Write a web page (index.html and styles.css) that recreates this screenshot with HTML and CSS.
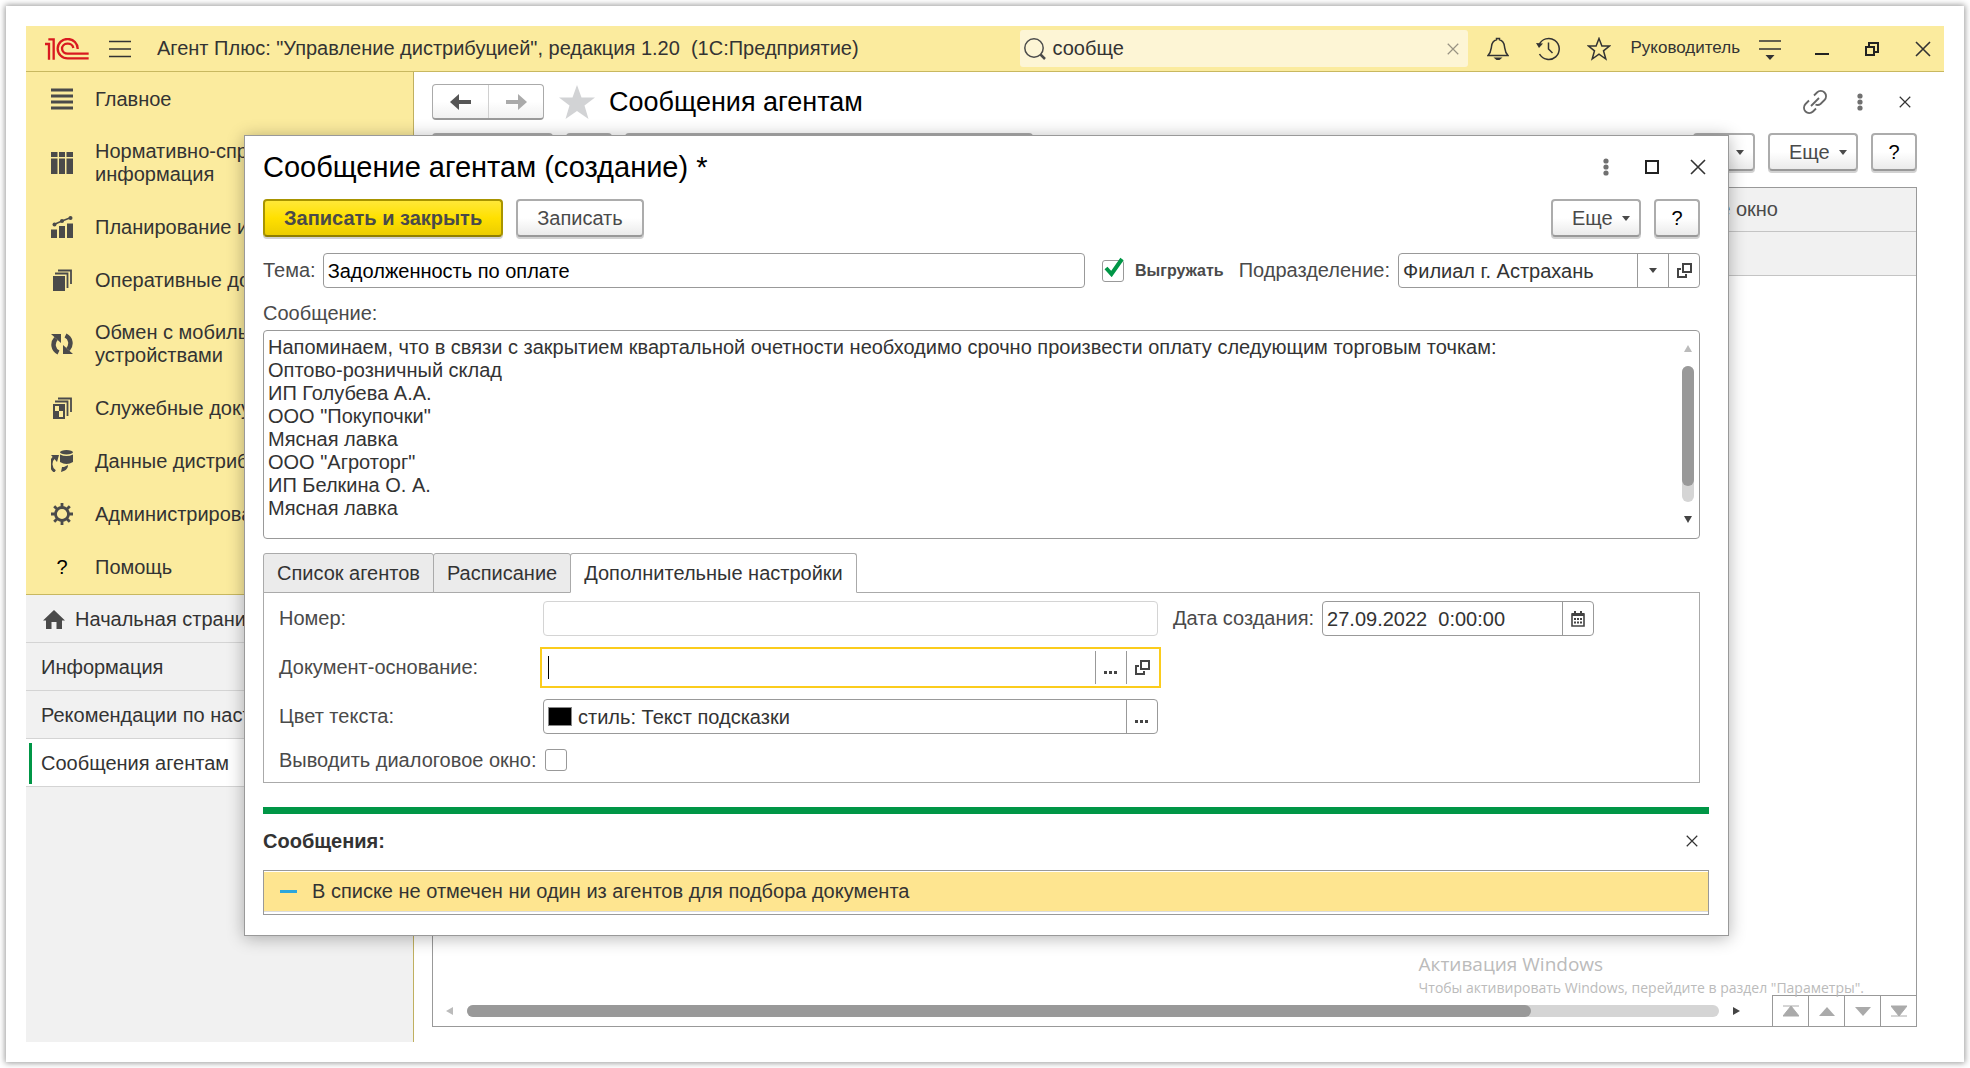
FILE: index.html
```html
<!DOCTYPE html>
<html lang="ru">
<head>
<meta charset="utf-8">
<title>Агент Плюс: Управление дистрибуцией</title>
<link rel="stylesheet" href="styles.css">
</head>
<body>
<svg class="sprite" aria-hidden="true">
  <symbol id="cross" viewBox="0 0 16 16"><path d="M1 1L15 15M15 1L1 15" fill="none" stroke="currentColor" stroke-width="1.6"/></symbol>
  <symbol id="dots" viewBox="0 0 6 18"><g fill="currentColor"><circle cx="3" cy="3" r="2.6"/><circle cx="3" cy="9" r="2.6"/><circle cx="3" cy="15" r="2.6"/></g></symbol>
  <symbol id="caret" viewBox="0 0 8 5"><path d="M0 0H8L4 5Z" fill="currentColor"/></symbol>
  <symbol id="open" viewBox="0 0 15 15"><path d="M6 1H14V9H6ZM4 6H1V14H9V11" fill="none" stroke="currentColor" stroke-width="2"/></symbol>
  <symbol id="ellipsis" viewBox="0 0 14 15"><path d="M0 11H3V14H0ZM5 11H8V14H5ZM10 11H13V14H10Z" fill="currentColor"/></symbol>
</svg>
<div class="app">
  <header class="topbar">
    <svg class="logo" width="44" height="22" viewBox="0 0 132 66" role="img" aria-label="1С"><g fill="none" stroke="#d91a20" stroke-width="7"><path d="M0 18H12V65M10 4H26V65"/><path d="M98 33A30 29 0 1 0 68 61H131"/><path d="M85 30A17 15 0 1 0 68 47H131"/></g></svg>
    <button class="icon-btn menu" aria-label="Меню"><svg width="22" height="18" viewBox="0 0 22 18"><path d="M0 1.500H22M0 9H22M0 16.500H22" stroke="#333" stroke-width="1.500"/></svg></button>
    <span class="app-title">Агент Плюс: "Управление дистрибуцией", редакция 1.20&nbsp; (1С:Предприятие)</span>
    <div class="search">
      <svg width="22" height="22" viewBox="0 0 22 22"><circle cx="10" cy="10" r="9.200" fill="none" stroke="#4c4c4c" stroke-width="1.500"/><path d="M16.500 16.500L21 21" stroke="#4c4c4c" stroke-width="2.500"/></svg>
      <input type="text" value="сообще" aria-label="Поиск">
      <button class="icon-btn muted" aria-label="Очистить"><svg width="12" height="12"><use href="#cross"/></svg></button>
    </div>
    <div class="tools">
      <button class="icon-btn" aria-label="Уведомления"><svg width="22" height="24" viewBox="0 0 22 24"><path d="M1 18.500C4 15.500 4 13 4.500 9.500C5 5.500 7 3.500 9.500 2.800V1.500H12.500V2.800C15 3.500 17 5.500 17.500 9.500C18 13 18 15.500 21 18.500Z" fill="none" stroke="#333" stroke-width="1.500"/><path d="M6.500 20.500H15.500L12.500 23H9.500Z" fill="#333"/></svg></button>
      <button class="icon-btn" aria-label="История"><svg width="24" height="24" viewBox="0 0 24 24"><path d="M3 8A10.500 10.500 0 1 1 3.500 17" fill="none" stroke="#333" stroke-width="1.500"/><path d="M0 6L7 6.500L3 11Z" fill="#333"/><path d="M12.500 5.500V12L16.500 16" fill="none" stroke="#333" stroke-width="1.500"/></svg></button>
      <button class="icon-btn" aria-label="Избранное"><svg width="24" height="24" viewBox="0 0 24 24"><path d="M12 1.500L14.900 9H22.500L16.500 13.800L18.800 22L12 17.200L5.200 22L7.500 13.800L1.500 9H9.100Z" fill="none" stroke="#333" stroke-width="1.500"/></svg></button>
      <a class="user" href="#">Руководитель</a>
      <button class="icon-btn" aria-label="Настройки"><svg width="22" height="22" viewBox="0 0 22 22"><path d="M0 3H22M0 11H22" stroke="#333" stroke-width="1.600"/><path d="M6.500 17H15.500L11 22Z" fill="#333"/></svg></button>
    </div>
    <div class="win-tools">
      <button class="icon-btn" aria-label="Свернуть"><svg width="14" height="14"><path d="M0 12H14" stroke="#222" stroke-width="2"/></svg></button>
      <button class="icon-btn" aria-label="Восстановить"><svg width="14" height="14"><path d="M1 5H9V13H1ZM4 4V1H13V10H10" fill="none" stroke="#222" stroke-width="2"/></svg></button>
      <button class="icon-btn" aria-label="Закрыть"><svg width="16" height="16"><use href="#cross"/></svg></button>
    </div>
  </header>

  <div class="body">
    <aside class="sidebar">
      <nav class="sections">
        <a href="#"><svg viewBox="0 0 22 22"><path d="M0 2H22M0 8H22M0 14H22M0 20H22" stroke="#4a4a4a" stroke-width="2.800"/></svg><span>Главное</span></a>
        <a href="#"><svg viewBox="0 0 22 22"><path d="M0 0H6.500V5H0ZM8 0H14V5H8ZM15.500 0H22V5H15.500ZM0 6.500H6.500V22H0ZM8 6.500H14V22H8ZM15.500 6.500H22V22H15.500Z" fill="#4a4a4a"/></svg><span>Нормативно-справочная информация</span></a>
        <a href="#"><svg viewBox="0 0 22 22"><path d="M0 13.500H6V22H0ZM8 10H14V22H8ZM16 7.500H22V22H16Z" fill="#4a4a4a"/><path d="M3 8.500L11 5L20 1.500" fill="none" stroke="#4a4a4a" stroke-width="1.500"/><circle cx="3.500" cy="8.500" r="2" fill="#4a4a4a"/><circle cx="11" cy="5" r="2" fill="#4a4a4a"/><circle cx="19.500" cy="2" r="2" fill="#4a4a4a"/></svg><span>Планирование и анализ</span></a>
        <a href="#"><svg viewBox="0 0 22 22"><path d="M2 7H14V22H2Z" fill="#4a4a4a"/><path d="M4 4.500H16.500V19M7 1.500H20V15" fill="none" stroke="#4a4a4a" stroke-width="1.800"/></svg><span>Оперативные документы</span></a>
        <a href="#"><svg viewBox="0 0 22 22"><path d="M7.500 19.500C2 17 1 10 5 5.500M14.500 2.500C20 5 21 12 17 16.500" fill="none" stroke="#4a4a4a" stroke-width="4.500"/><path d="M0 1H10V10ZM22 21H12V12Z" fill="#4a4a4a"/></svg><span>Обмен с мобильными устройствами</span></a>
        <a href="#"><svg viewBox="0 0 22 22"><path d="M3 8H13V21H3Z" fill="none" stroke="#4a4a4a" stroke-width="2"/><path d="M8 8H13V14H8ZM3 14H8V21H3Z" fill="#4a4a4a"/><path d="M4 4.500H16.500V19M7 1.500H20V15" fill="none" stroke="#4a4a4a" stroke-width="1.800"/></svg><span>Служебные документы</span></a>
        <a href="#"><svg viewBox="0 0 22 22"><ellipse cx="15.500" cy="2.200" rx="6.500" ry="2.200" fill="#4a4a4a"/><path d="M9 4.500Q15.500 7.500 22 4.500V12Q15.500 16 9 12Z" fill="#4a4a4a"/><path d="M4 21.500C-1 18 -1 11 3 7.500" fill="none" stroke="#4a4a4a" stroke-width="2.800"/><path d="M0 5H8L6 12Z" fill="#4a4a4a"/><path d="M17 15C17 19 14 21 10 22L11 17H13Z" fill="#4a4a4a"/></svg><span>Данные дистрибуции</span></a>
        <a href="#"><svg viewBox="0 0 22 22"><circle cx="11" cy="11" r="6.500" fill="none" stroke="#4a4a4a" stroke-width="2.800"/><path d="M11 0V4M11 18V22M0 11H4M18 11H22M3.200 3.200L6 6M16 16L18.800 18.800M18.800 3.200L16 6M6 16L3.200 18.800" stroke="#4a4a4a" stroke-width="2.800"/></svg><span>Администрирование</span></a>
        <a href="#"><b class="glyph">?</b><span>Помощь</span></a>
      </nav>
      <nav class="windows">
        <a href="#"><svg width="22" height="19" viewBox="0 0 22 19"><path d="M11 0L22 10.500H19V19H13.500V12H8.500V19H3V10.500H0Z" fill="#4a4a4a"/></svg>Начальная страница</a>
        <a href="#">Информация</a>
        <a href="#">Рекомендации по настройке</a>
        <a href="#" class="current">Сообщения агентам</a>
      </nav>
    </aside>

    <main class="main">
      <div class="page-head">
        <div class="history">
          <button aria-label="Назад"><svg width="21" height="16" viewBox="0 0 21 16"><path d="M0 8L9 0V6H21V10H9V16Z" fill="#555"/></svg></button>
          <button aria-label="Вперед"><svg width="21" height="16" viewBox="0 0 21 16"><path d="M21 8L12 0V6H0V10H12V16Z" fill="#aaa"/></svg></button>
        </div>
        <svg class="fav" width="36" height="34" viewBox="0 0 36 34"><path d="M18 0L22.500 12.500H36L25.500 20.500L29.500 34L18 26L6.500 34L10.500 20.500L0 12.500H13.500Z" fill="#d2d3d5"/></svg>
        <h1>Сообщения агентам</h1>
        <div class="page-tools">
          <button class="icon-btn soft" aria-label="Ссылка"><svg width="24" height="24" viewBox="0 0 24 24"><path d="M11 5.500L14 2.500A5 5 0 0 1 21.500 10L17.500 14A5 5 0 0 1 12.500 14.500M13 18.500L10 21.500A5 5 0 0 1 2.500 14L6 10.500M8 16L16 8" fill="none" stroke="#666" stroke-width="1.800"/></svg></button>
          <button class="icon-btn soft" aria-label="Еще"><svg width="6" height="18"><use href="#dots"/></svg></button>
          <button class="icon-btn" aria-label="Закрыть"><svg width="12" height="12"><use href="#cross"/></svg></button>
        </div>
      </div>
      <div class="toolbar">
        <button class="btn ghost-a" aria-label="Создать"></button>
        <button class="btn ghost-b" aria-label="Скопировать"></button>
        <button class="btn ghost-c" aria-label="Поиск"></button>
        <button class="btn drop push" aria-label="Параметры"><svg width="8" height="5"><use href="#caret"/></svg></button>
        <button class="btn more">Еще<svg width="8" height="5"><use href="#caret"/></svg></button>
        <button class="btn help">?</button>
      </div>
      <section class="list">
        <table>
          <thead><tr><th>Диалоговое окно</th></tr></thead>
          <tbody><tr><td></td></tr></tbody>
        </table>
        <div class="list-foot">
          <div class="hscroll">
            <i class="arrow left"></i>
            <div class="track"><div class="thumb"></div></div>
            <i class="arrow right"></i>
          </div>
          <div class="pager">
            <button aria-label="В начало"><svg width="16" height="12"><path d="M0 1H16M8 1L16 11H0Z" fill="#aaa" stroke="#aaa" stroke-width="1"/></svg></button>
            <button aria-label="Вверх"><svg width="16" height="12"><path d="M8 2L16 11H0Z" fill="#aaa"/></svg></button>
            <button aria-label="Вниз"><svg width="16" height="12"><path d="M8 11L16 2H0Z" fill="#aaa"/></svg></button>
            <button aria-label="В конец"><svg width="16" height="12"><path d="M0 11H16M8 11L16 1H0Z" fill="#aaa" stroke="#aaa" stroke-width="1"/></svg></button>
          </div>
        </div>
        <div class="activation"><p class="big">Активация Windows</p><p>Чтобы активировать Windows, перейдите в раздел "Параметры".</p></div>
      </section>
    </main>
  </div>

  <section class="dialog" role="dialog" aria-labelledby="dlg-title">
    <header class="dialog-head">
      <h2 id="dlg-title">Сообщение агентам (создание) *</h2>
      <div class="dialog-tools">
        <button class="icon-btn soft" aria-label="Меню"><svg width="6" height="18"><use href="#dots"/></svg></button>
        <button class="icon-btn" aria-label="Развернуть"><svg width="14" height="14"><path d="M1 1H13V13H1Z" fill="none" stroke="#222" stroke-width="2"/></svg></button>
        <button class="icon-btn" aria-label="Закрыть"><svg width="16" height="16"><use href="#cross"/></svg></button>
      </div>
    </header>
    <form class="form">
      <div class="commands">
        <button type="button" class="btn primary">Записать и закрыть</button>
        <button type="button" class="btn">Записать</button>
        <button type="button" class="btn more push">Еще<svg width="8" height="5"><use href="#caret"/></svg></button>
        <button type="button" class="btn help">?</button>
      </div>
      <div class="row">
        <label for="subject">Тема:</label>
        <div class="field grow"><input id="subject" class="dark" type="text" value="Задолженность по оплате"></div>
        <div class="check">
          <input id="upload" type="checkbox" checked>
          <svg class="tick" width="22" height="20" viewBox="0 0 22 20"><path d="M3 11L8.500 17L19 2" fill="none" stroke="#009646" stroke-width="4"/></svg>
          <label for="upload">Выгружать</label>
        </div>
        <label for="dept">Подразделение:</label>
        <div class="field dept">
          <input id="dept" type="text" value="Филиал г. Астрахань">
          <button type="button" aria-label="Выбрать"><svg width="8" height="5"><use href="#caret"/></svg></button>
          <button type="button" aria-label="Открыть"><svg width="15" height="15"><use href="#open"/></svg></button>
        </div>
      </div>
      <label class="block" for="text">Сообщение:</label>
      <div class="memo">
        <textarea id="text" rows="8">Напоминаем, что в связи с закрытием квартальной очетности необходимо срочно произвести оплату следующим торговым точкам:
Оптово-розничный склад
ИП Голубева А.А.
ООО "Покупочки"
Мясная лавка
ООО "Агроторг"
ИП Белкина О. А.
Мясная лавка</textarea>
        <div class="vscroll"><i class="arrow up"></i><div class="track"><div class="thumb"></div></div><i class="arrow down"></i></div>
      </div>
      <div class="tabs" role="tablist">
        <button type="button" role="tab">Список агентов</button>
        <button type="button" role="tab">Расписание</button>
        <button type="button" role="tab" class="active" aria-selected="true">Дополнительные настройки</button>
      </div>
      <div class="panel" role="tabpanel">
        <label for="num">Номер:</label>
        <div class="field readonly"><input id="num" type="text" readonly></div>
        <div class="date">
          <label for="date">Дата создания:</label>
          <div class="field"><input id="date" type="text" value="27.09.2022&nbsp; 0:00:00">
            <button type="button" aria-label="Календарь"><svg width="14" height="16" viewBox="0 0 14 16"><path d="M1 3H13V15H1Z" fill="none" stroke="#444" stroke-width="1.600"/><path d="M1 2H13V5H1ZM3 0H5V2H3ZM9 0H11V2H9Z" fill="#444"/><path d="M3 8H11M3 11.500H11" stroke="#444" stroke-width="2" stroke-dasharray="2 1"/></svg></button></div>
        </div>
        <label for="base">Документ-основание:</label>
        <div class="field focused"><i class="cursor"></i><input id="base" type="text">
          <button type="button" aria-label="Выбрать"><svg width="14" height="15"><use href="#ellipsis"/></svg></button>
          <button type="button" aria-label="Открыть"><svg width="15" height="15"><use href="#open"/></svg></button></div>
        <label for="color">Цвет текста:</label>
        <div class="field"><i class="swatch"></i><input id="color" type="text" value="стиль: Текст подсказки">
          <button type="button" aria-label="Выбрать"><svg width="14" height="15"><use href="#ellipsis"/></svg></button></div>
        <div class="check-row"><label for="dialogbox">Выводить диалоговое окно:</label><input id="dialogbox" type="checkbox"></div>
      </div>
    </form>
    <section class="messages">
      <div class="messages-head"><h3>Сообщения:</h3><button class="icon-btn" aria-label="Закрыть сообщения"><svg width="12" height="12"><use href="#cross"/></svg></button></div>
      <div class="message-box"><p><i class="dash"></i>В списке не отмечен ни один из агентов для подбора документа</p></div>
    </section>
  </section>
</div>
</body>
</html>
```
FILE: styles.css
```css
* { box-sizing: border-box; }
html { background: #fff; }
body {
  margin: 6px;
  padding: 20px;
  min-height: calc(100vh - 12px);
  display: flex;
  background: #fff;
  box-shadow: 0 0 6px 1px rgba(0, 0, 0, .4);
  font: 20px/23px "Liberation Sans", Arial, sans-serif;
  color: #333;
}
h1, h2, h3, p { margin: 0; font-weight: normal; }
a { color: inherit; text-decoration: none; }
button, input, textarea { font: inherit; color: inherit; margin: 0; }
i { font-style: normal; }
svg { display: block; flex: none; }
.sprite { position: absolute; width: 0; height: 0; }
.app { position: relative; flex: 1; min-width: 0; display: flex; flex-direction: column; }

.icon-btn {
  display: flex; align-items: center; justify-content: center;
  padding: 0; border: 0; background: none; color: #333;
}
.icon-btn.soft { color: #707070; }
.icon-btn.muted { color: #999383; }

/* Top bar */
.topbar {
  display: flex; align-items: center;
  height: 46px; padding: 0 13px 0 19px;
  background: #fbeb9e; border-bottom: 1px solid #c8b860;
}
.menu { margin: 0 26px 0 20px; }
.app-title { flex: 1; white-space: nowrap; }
.search {
  display: flex; align-items: center; gap: 6px;
  width: 448px; height: 37px; padding: 0 9px 0 4px;
  background: #fdf5d5; border-radius: 3px;
}
.search input { flex: 1; min-width: 0; padding: 0; border: 0; background: none; outline: 0; }
.tools { display: flex; align-items: center; gap: 27px; margin-left: 19px; }
.user { font-size: 17px; margin: 0 -8px; padding-bottom: 3px; }
.win-tools { display: flex; align-items: center; gap: 36px; margin-left: 34px; }

.body { flex: 1; display: flex; }

/* Side panel */
.sidebar { flex: none; width: 388px; background: #f1f1f1; border-right: 1px solid #c0b060; }
.sections { padding-bottom: 1px; background: #fbeb9e; border-bottom: 1px solid #c8b860; }
.sections a { display: flex; align-items: center; gap: 22px; min-height: 53px; padding: 15px 24px 14px 25px; }
.sections a svg, .glyph { width: 22px; height: 22px; }
.glyph { flex: none; font-weight: normal; text-align: center; color: #000; }
.windows a {
  display: flex; align-items: center; gap: 10px;
  height: 48px; padding: 1px 0 0 15px; border-bottom: 1px solid #d4d4d4; white-space: nowrap;
}
.windows svg { margin-left: 2px; }
.windows .current { padding-left: 9px; background: #fff; }
.windows .current::before { content: ""; width: 3px; height: 41px; margin: 0 -1px 0 -6px; background: #009646; }

/* Page behind the dialog */
.main { flex: 1; min-width: 0; display: flex; flex-direction: column; padding: 12px 27px 15px 18px; }
.page-head { display: flex; align-items: center; height: 36px; }
.history { display: flex; border: 1px solid #aaa; border-bottom: 2px solid #999; border-radius: 4px; background: linear-gradient(#fff 50%, #f0f0f0); }
.history button { width: 55px; height: 33px; padding: 0; border: 0; background: none; display: flex; align-items: center; justify-content: center; }
.history button + button { border-left: 1px solid #d0d0d0; }
.fav { margin: 0 14px 0 15px; }
h1 { font-size: 27px; line-height: 36px; color: #000; }
h2 { font-size: 29px; line-height: 36px; color: #000; }
.page-tools { display: flex; align-items: center; gap: 21px; margin-left: auto; }
.page-tools .icon-btn { width: 24px; }
.toolbar { display: flex; gap: 13px; margin-top: 13px; }
.push { margin-left: auto; }

.btn {
  display: flex; align-items: center; justify-content: center;
  height: 38px; padding: 0 19px; white-space: nowrap;
  border: 2px solid #acacac; border-bottom-color: #999; border-radius: 4px;
  background: linear-gradient(#fff 50%, #ebebeb);
  box-shadow: 0 2px 0 #d2d2d2; color: #4a4a4a;
}
.btn.primary {
  border-color: #a89400; border-bottom-color: #8f7e00;
  background: linear-gradient(#ffe838, #ffe000 50%, #eccd00); font-weight: bold;
}
.btn.more { width: 90px; padding: 0 9px 0 19px; justify-content: space-between; }
.btn.help { width: 46px; padding: 0; color: #000; }
.btn.drop { width: 62px; padding: 0 9px; justify-content: flex-end; }
.ghost-a { width: 121px; }
.ghost-b { width: 46px; }
.ghost-c { width: 408px; }

.list { position: relative; flex: 1; display: flex; flex-direction: column; margin-top: 16px; border: 1px solid #999; }
table { width: 100%; border-spacing: 0; }
th, td { height: 44px; padding: 0 138px 0 0; background: #f1f1f1; border-bottom: 1px solid #c4c4c4; font-weight: normal; text-align: right; color: #4a4a4a; }
.list-foot { display: flex; align-items: flex-end; margin-top: auto; }
.hscroll { flex: 1; display: flex; align-items: center; gap: 14px; height: 31px; padding: 0 32px 0 13px; }
.track { border-radius: 6px; background: #d5d5d5; }
.thumb { border-radius: 6px; background: #999; }
.hscroll .track { flex: 1; height: 12px; }
.hscroll .thumb { width: 85%; height: 12px; }
.arrow { flex: none; border: 4px solid transparent; }
.arrow.left { border-width: 4px 7px 4px 0; border-right-color: #bbb; }
.arrow.right { border-width: 4px 0 4px 7px; border-left-color: #444; }
.arrow.up { border-width: 0 4px 7px; border-bottom-color: #bbb; }
.arrow.down { border-width: 7px 4px 0; border-top-color: #444; }
.pager { display: flex; border-top: 1px solid #999; }
.pager button { display: flex; align-items: center; justify-content: center; width: 36px; height: 30px; padding: 0; border: 0; border-left: 1px solid #999; background: #fff; }
.activation { position: absolute; right: 52px; bottom: 27px; font: 14px/23px "Open Sans", "Noto Sans", sans-serif; color: #bbb; white-space: nowrap; }
.activation .big { font-size: 19px; }

/* Dialog */
.dialog {
  position: absolute; top: 109px; left: 218px; right: 215px;
  padding: 0 19px 20px 18px;
  background: #fff; border: 1px solid #999;
  box-shadow: 0 2px 16px rgba(0, 0, 0, .3);
}
.dialog-head { display: flex; align-items: center; justify-content: space-between; height: 61px; margin-bottom: 2px; padding-right: 3px; }
.dialog-tools { display: flex; align-items: center; gap: 31px; }
.dialog-tools .soft { width: 16px; }
.form { margin-right: 9px; color: #4a4a4a; }
.form input[type=text], .form textarea { color: #333; }
.form input.dark { color: #000; }
.commands { display: flex; gap: 13px; margin-bottom: 16px; }
.row { display: flex; align-items: center; }
.field {
  position: relative; display: flex; align-items: stretch; height: 35px; min-width: 0;
  border: 1px solid #999; border-radius: 4px; background: #fff;
}
.field input { flex: 1; width: 0; min-width: 0; padding: 1px 4px 0; border: 0; background: none; outline: 0; }
.field button { display: flex; align-items: center; justify-content: center; width: 31px; padding: 0; border: 0; border-left: 1px solid #999; background: none; color: #444; }
.grow { flex: 1; margin-left: 7px; }
.check { position: relative; display: flex; align-items: center; gap: 11px; margin: 0 15px 0 17px; font-size: 16px; font-weight: bold; }
input[type=checkbox] { appearance: none; width: 22px; height: 22px; border: 1px solid #999; border-radius: 3px; background: #fff; }
.tick { position: absolute; left: 1px; top: -2px; pointer-events: none; }
.dept { width: 302px; margin-left: 8px; }
.block { display: block; margin: 14px 0 5px; }
.memo { display: flex; border: 1px solid #999; border-radius: 4px; }
.memo textarea { flex: 1; display: block; padding: 5px 4px 18px; border: 0; background: none; resize: none; outline: 0; overflow: hidden; }
.vscroll { display: flex; flex-direction: column; align-items: center; gap: 14px; width: 12px; margin: 14px 5px 15px; }
.vscroll .track { flex: 1; width: 12px; }
.vscroll .thumb { width: 12px; height: 88%; }

.tabs { display: flex; margin-top: 14px; }
.tabs button {
  height: 40px; margin: 0 0 -1px -1px; padding: 0 13px; position: relative;
  border: 1px solid #aaa; border-radius: 3px 3px 0 0; background: #ebebeb; color: #333;
}
.tabs button:first-child { margin-left: 0; }
.tabs .active { background: #fff; border-bottom-color: #fff; }
.panel {
  display: grid; grid-template-columns: 264px minmax(0, 615px) auto; justify-content: start; align-items: center;
  row-gap: 14px; padding: 8px 15px 11px; border: 1px solid #aaa;
}
.panel > label { grid-column: 1; }
.date { display: flex; align-items: center; gap: 8px; margin-left: 15px; }
.date .field { width: 272px; }
.readonly { border-color: #d4d4d4; }
.focused { border-color: transparent; outline: 2px solid #fbcc1c; outline-offset: 1px; border-radius: 0; }
.cursor { position: absolute; left: 4px; top: 5px; width: 1px; height: 23px; background: #000; }
.swatch { width: 24px; height: 19px; margin: 7px 2px 0 4px; background: #000; border: 1px solid #888; }
.check-row { grid-column: 1 / -1; display: flex; align-items: center; gap: 8px; padding-top: 1px; height: 23px; }

.messages { margin-top: 24px; border-top: 7px solid #009646; }
.messages-head { display: flex; align-items: center; justify-content: space-between; height: 56px; padding: 0 11px 2px 0; }
h3 { font-size: 20px; line-height: 23px; font-weight: bold; }
.message-box { padding: 1px 0 2px; border: 1px solid #999; }
.message-box p { display: flex; align-items: center; gap: 15px; height: 40px; padding-left: 16px; background: #fee590; border-bottom: 1px solid #ddd; }
.dash { width: 17px; height: 3px; background: #2ca6dc; }
```
